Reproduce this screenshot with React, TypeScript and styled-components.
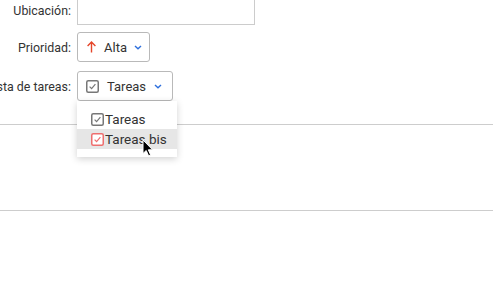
import styled, { createGlobalStyle } from 'styled-components';

const Global = createGlobalStyle`
  html, body {
    margin: 0;
    padding: 0;
    background: #fff;
    overflow: hidden;
  }
  body {
    font-family: Roboto, "Liberation Sans", sans-serif;
    font-size: 13px;
    color: #333;
  }
`;

const Page = styled.div`
  width: 493px;
  height: 284px;
  margin-top: -5px;
`;

const Form = styled.div`
  display: flex;
  flex-direction: column;
`;

const Row = styled.div<{ $after: number }>`
  display: flex;
  align-items: center;
  gap: 6px;
  margin-bottom: ${p => p.$after}px;
`;

const Label = styled.div`
  width: 71px;
  flex: none;
  display: flex;
  justify-content: flex-end;
  white-space: nowrap;
  font-size: 12.4px;
  color: #333;
`;

const TextInput = styled.div`
  width: 178px;
  height: 30px;
  box-sizing: border-box;
  border: 1px solid #ccc;
  background: #fff;
`;

const Picker = styled.div`
  position: relative;
`;

const SelectButton = styled.div<{ $width: number; $start: number; $end: number }>`
  width: ${p => p.$width}px;
  height: 30px;
  box-sizing: border-box;
  border: 1px solid #b9b9b9;
  border-radius: 3px;
  display: flex;
  align-items: center;
  padding: 0 ${p => p.$end}px 0 ${p => p.$start}px;
  background: #fff;
`;

const ButtonText = styled.span`
  margin-left: 8px;
  color: #333;
`;

const Chevron = styled.svg`
  margin-left: auto;
  flex: none;
`;

const Menu = styled.div`
  position: absolute;
  top: 100%;
  left: 0;
  width: 100px;
  padding: 8px 0;
  background: #fff;
  box-shadow: 0 2px 7px rgba(0, 0, 0, 0.18);
  z-index: 2;
`;

const MenuItem = styled.div<{ $active?: boolean }>`
  height: 20px;
  display: flex;
  align-items: center;
  padding-left: 14px;
  gap: 1px;
  font-size: 13.5px;
  color: #333;
  background: ${p => (p.$active ? '#e6e6e6' : 'transparent')};
`;

const Pointer = styled.svg`
  position: absolute;
  left: 65px;
  top: 38px;
`;

const Divider = styled.div<{ $top: number }>`
  height: 0;
  border-top: 1px solid #cdcdcd;
  margin-top: ${p => p.$top}px;
`;

function Check({ color }: { color: string }) {
  return (
    <svg width="13" height="13" viewBox="0 0 13 13">
      <rect x="0.75" y="0.75" width="11.5" height="11.5" rx="1.5" fill="#fff" stroke={color} strokeWidth="1.5" />
      <path d="M3.6 6.6 L5.6 8.6 L9.4 4.2" fill="none" stroke={color} strokeWidth="1.2" />
    </svg>
  );
}

function Down() {
  return (
    <Chevron width="8" height="5" viewBox="0 0 8 5">
      <path d="M1 1 L4 3.8 L7 1" fill="none" stroke="#2d6fdc" strokeWidth="1.4" />
    </Chevron>
  );
}

export default function App() {
  return (
    <Page>
      <Global />
      <Form>
        <Row $after={7}>
          <Label>Ubicación:</Label>
          <TextInput />
        </Row>
        <Row $after={9}>
          <Label>Prioridad:</Label>
          <SelectButton $width={73} $start={9} $end={7}>
            <svg width="9" height="12" viewBox="0 0 9 12">
              <path d="M4.5 11.5 V1.2 M0.6 5 L4.5 1.1 L8.4 5" fill="none" stroke="#e5462a" strokeWidth="1.4" />
            </svg>
            <ButtonText>Alta</ButtonText>
            <Down />
          </SelectButton>
        </Row>
        <Row $after={0}>
          <Label>Lista de tareas:</Label>
          <Picker>
            <SelectButton $width={96} $start={8} $end={10}>
              <Check color="#777" />
              <ButtonText>Tareas</ButtonText>
              <Down />
            </SelectButton>
            <Menu>
              <MenuItem>
                <Check color="#777" />
                <span>Tareas</span>
              </MenuItem>
              <MenuItem $active>
                <Check color="#ee6e6e" />
                <span>Tareas bis</span>
              </MenuItem>
              <Pointer width="12" height="18" viewBox="0 0 12 18">
                <path d="M1 1 L1 14.5 L4.2 11.5 L6.6 16.8 L8.6 15.9 L6.3 10.8 L10.6 10.8 Z" fill="#000" stroke="#fff" strokeWidth="1" />
              </Pointer>
            </Menu>
          </Picker>
        </Row>
      </Form>
      <Divider $top={23} />
      <Divider $top={85} />
    </Page>
  );
}
